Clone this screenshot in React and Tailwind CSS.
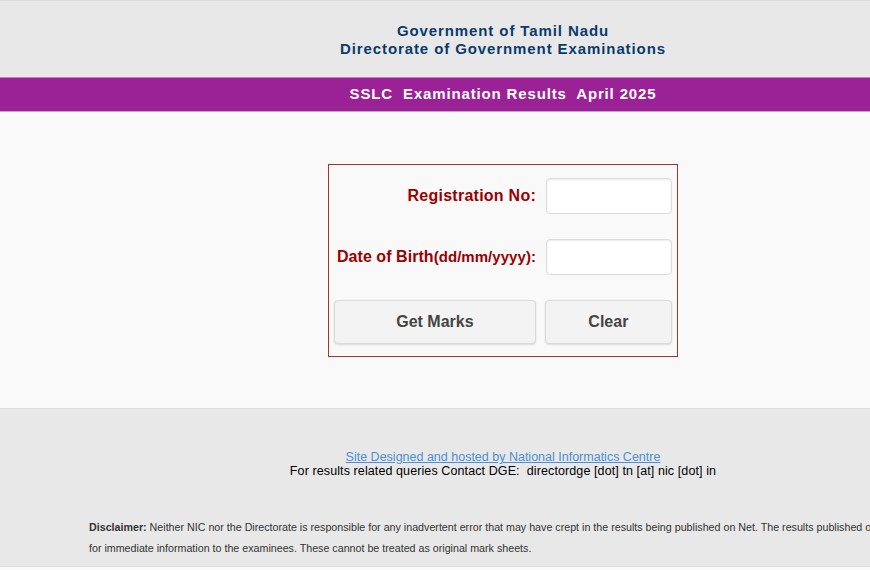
import { useState } from "react";

export default function App() {
  const [regNo, setRegNo] = useState("");
  const [dob, setDob] = useState("");

  const clear = () => {
    setRegNo("");
    setDob("");
  };

  return (
    <div className="w-full h-[570px] overflow-hidden bg-[#f9f9f9]" style={{ fontFamily: '"Liberation Sans", Arial, sans-serif' }}>
      <div className="w-[1006px]">
        {/* Header */}
        <div className="border-t border-[#dcdcdc] bg-[#e8e8e8] h-[77px] flex flex-col items-center pt-[21px]">
          <div className="text-[15px] font-bold leading-[18px] tracking-[0.9px] text-[#0b3b6b]">Government of Tamil Nadu</div>
          <div className="text-[15px] font-bold leading-[18px] tracking-[0.9px] text-[#0b3b6b]">Directorate of Government Examinations</div>
        </div>

        {/* Title band */}
        <div className="h-[35px] bg-[#9b2196] border-t border-[#c184be] border-b border-b-[#c9a6c7] flex items-center justify-center">
          <span className="text-[15px] font-bold text-white whitespace-pre tracking-[0.85px]">SSLC  Examination Results  April 2025</span>
        </div>

        {/* Form area */}
        <div className="h-[296px] flex justify-center pt-[52px]">
          <div className="w-[350px] h-[193px] border border-[#a83232] px-[5px] pt-[13px]">
            <div className="flex items-center h-[36px]">
              <label className="w-[202px] shrink-0 text-right text-[16px] font-bold tracking-[0.25px] text-[#990000]">Registration No:</label>
              <input
                value={regNo}
                onChange={(e) => setRegNo(e.target.value)}
                className="ml-[10px] shrink-0 w-[126px] h-[36px] rounded-[4px] border border-[#dcdcdc] bg-white shadow-[inset_0_1px_2px_rgba(0,0,0,0.08)] px-2 text-sm outline-none"
              />
            </div>
            <div className="flex items-center h-[36px] mt-[25px]">
              <label className="w-[202px] shrink-0 text-right text-[16px] font-bold tracking-[0.05px] text-[#990000] whitespace-nowrap">
                Date of Birth<span className="text-[15px]">(dd/mm/yyyy):</span>
              </label>
              <input
                value={dob}
                onChange={(e) => setDob(e.target.value)}
                className="ml-[10px] shrink-0 w-[126px] h-[36px] rounded-[4px] border border-[#dcdcdc] bg-white shadow-[inset_0_1px_2px_rgba(0,0,0,0.08)] px-2 text-sm outline-none"
              />
            </div>
            <div className="flex mt-[25px]">
              <button className="w-[203px] h-[44px] rounded-[4px] border border-[#dadada] bg-[#f3f3f3] shadow-[0_1px_2px_rgba(0,0,0,0.12)] text-[16px] font-bold text-[#444]">
                Get Marks
              </button>
              <button
                onClick={clear}
                className="ml-[9px] w-[128px] h-[44px] rounded-[4px] border border-[#dadada] bg-[#f3f3f3] shadow-[0_1px_2px_rgba(0,0,0,0.12)] text-[16px] font-bold text-[#444]"
              >
                Clear
              </button>
            </div>
          </div>
        </div>

        {/* Footer */}
        <div className="border-t border-[#dedede] border-b bg-[#e8e8e8] h-[159px] pt-[41px]">
          <div className="text-center text-[12.5px] leading-[14px]">
            <a href="#" className="text-[#4a8fd6] underline">Site Designed and hosted by National Informatics Centre</a>
          </div>
          <div className="text-center text-[12.5px] leading-[14px] tracking-[0.1px] text-black">
            For results related queries Contact DGE:&nbsp; directordge [dot] tn [at] nic [dot] in
          </div>
          <div className="pl-[89px] mt-[39px] text-[10.7px] leading-[21px] text-[#333] whitespace-nowrap">
            <b>Disclaimer:</b> Neither NIC nor the Directorate is responsible for any inadvertent error that may have crept in the results being published on Net. The results published on this website are
            <br />
            for immediate information to the examinees. These cannot be treated as original mark sheets.
          </div>
        </div>
      </div>
    </div>
  );
}
